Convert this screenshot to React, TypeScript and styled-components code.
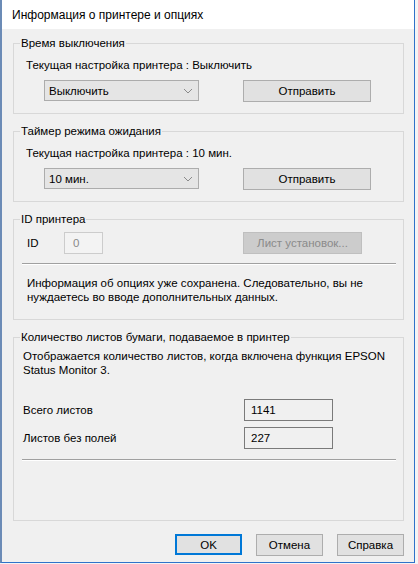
import React from "react";
import styled, { createGlobalStyle } from "styled-components";

const GlobalStyle = createGlobalStyle`
  html, body {
    margin: 0;
    padding: 0;
    background: #f4f4f4;
  }
  body {
    font-family: "Liberation Sans", Arial, sans-serif;
    font-size: 11.5px;
    color: #000;
  }
`;

const Window = styled.div`
  width: 415px;
  height: 563px;
  box-sizing: border-box;
  background: #f0f0f0;
  border-left: 2px solid #6b8bb6;
  border-right: 1px solid #2f72c9;
  border-bottom: 1px solid #2f72c9;
  display: flex;
  flex-direction: column;
`;

const TitleBar = styled.div`
  height: 29px;
  flex: none;
  background: #fff;
  display: flex;
  align-items: center;
  padding-left: 10px;
  font-size: 12px;
`;

const Body = styled.div`
  flex: 1;
  display: flex;
  flex-direction: column;
  gap: 9px;
  padding: 6px 10px 0 11px;
`;

const Group = styled.fieldset`
  margin: 0;
  padding: 0;
  min-width: 0;
  border: 1px solid #d8d8d8;
`;

const Legend = styled.legend`
  margin-left: 6px;
  padding: 0 1px;
  line-height: 16px;
`;

const Content = styled.div<{ $pad: string }>`
  padding: ${(p) => p.$pad};
  display: flex;
  flex-direction: column;
`;

const Line = styled.div<{ $lh?: number; $indent?: number; $top?: number }>`
  line-height: ${(p) => p.$lh ?? 16}px;
  padding-left: ${(p) => p.$indent ?? 0}px;
  margin-top: ${(p) => p.$top ?? 0}px;
`;

const Row = styled.div<{ $top: number; $indent?: number; $h?: number }>`
  display: flex;
  align-items: center;
  margin-top: ${(p) => p.$top}px;
  padding-left: ${(p) => p.$indent ?? 0}px;
  height: ${(p) => p.$h ?? 22}px;
`;

const Select = styled.div`
  width: 155px;
  height: 21px;
  box-sizing: border-box;
  background: #e5e5e5;
  border: 1px solid #acacac;
  display: flex;
  align-items: center;
  justify-content: space-between;
  padding: 0 5px 0 4px;
`;

const Button = styled.div<{ $w: number; $gap?: number; $disabled?: boolean; $default?: boolean }>`
  width: ${(p) => p.$w}px;
  height: ${(p) => (p.$default ? 21 : 22)}px;
  box-sizing: border-box;
  margin-left: ${(p) => p.$gap ?? 0}px;
  background: ${(p) => (p.$disabled ? "#cccccc" : "#e1e1e1")};
  border: ${(p) =>
    p.$default ? "2px solid #0078d7" : p.$disabled ? "1px solid #bfbfbf" : "1px solid #adadad"};
  color: ${(p) => (p.$disabled ? "#8a8a8a" : "#000")};
  display: flex;
  align-items: center;
  justify-content: center;
`;

const Label = styled.div<{ $w: number }>`
  width: ${(p) => p.$w}px;
  flex: none;
`;

const Field = styled.div<{ $w: number; $disabled?: boolean }>`
  width: ${(p) => p.$w}px;
  height: 22px;
  box-sizing: border-box;
  background: ${(p) => (p.$disabled ? "#f3f3f3" : "#f0f0f0")};
  border: 1px solid ${(p) => (p.$disabled ? "#cccccc" : "#7a7a7a")};
  color: ${(p) => (p.$disabled ? "#8a8a8a" : "#000")};
  display: flex;
  align-items: center;
  padding-left: ${(p) => (p.$disabled ? 8 : 6)}px;
`;

const Separator = styled.div<{ $top: number }>`
  margin-top: ${(p) => p.$top}px;
  height: 1px;
  background: #a0a0a0;
  border-bottom: 1px solid #ffffff;
`;

const Footer = styled.div`
  display: flex;
  justify-content: flex-end;
  gap: 14px;
  margin-top: 4px;
`;

function Chevron() {
  return (
    <svg width="10" height="6" viewBox="0 0 10 6">
      <polyline points="1,1 5,5 9,1" fill="none" stroke="#8a8a8a" strokeWidth="1" />
    </svg>
  );
}

function SettingGroup({ title, current, value }: { title: string; current: string; value: string }) {
  return (
    <Group>
      <Legend>{title}</Legend>
      <Content $pad="6px 12px 12px 12px">
        <Line>Текущая настройка принтера : {current}</Line>
        <Row $top={7} $indent={18} $h={21}>
          <Select>
            <span>{value}</span>
            <Chevron />
          </Select>
          <Button $w={128} $gap={44}>
            Отправить
          </Button>
        </Row>
      </Content>
    </Group>
  );
}

export default function App() {
  return (
    <>
      <GlobalStyle />
      <Window>
        <TitleBar>Информация о принтере и опциях</TitleBar>
        <Body>
          <SettingGroup title="Время выключения" current="Выключить" value="Выключить" />
          <SettingGroup title="Таймер режима ожидания" current="10 мин." value="10 мин." />
          <Group>
            <Legend>ID принтера</Legend>
            <Content $pad="5px 7px 15px 8px">
              <Row $top={0} $indent={5}>
                <Label $w={37}>ID</Label>
                <Field $w={39} $disabled>
                  0
                </Field>
                <Button $w={119} $gap={140} $disabled>
                  Лист установок...
                </Button>
              </Row>
              <Separator $top={9} />
              <Line $lh={14} $indent={5} $top={11}>
                Информация об опциях уже сохранена. Следовательно, вы не
                <br />
                нуждаетесь во вводе дополнительных данных.
              </Line>
            </Content>
          </Group>
          <Group>
            <Legend>Количество листов бумаги, подаваемое в принтер</Legend>
            <Content $pad="4px 7px 59px 8px">
              <Line $lh={14} $indent={1}>
                Отображается количество листов, когда включена функция EPSON
                <br />
                Status Monitor 3.
              </Line>
              <Row $top={22} $indent={1}>
                <Label $w={221}>Всего листов</Label>
                <Field $w={89}>1141</Field>
              </Row>
              <Row $top={6} $indent={1}>
                <Label $w={221}>Листов без полей</Label>
                <Field $w={89}>227</Field>
              </Row>
              <Separator $top={10} />
            </Content>
          </Group>
          <Footer>
            <Button $w={67} $default>
              OK
            </Button>
            <Button $w={67}>Отмена</Button>
            <Button $w={67}>Справка</Button>
          </Footer>
        </Body>
      </Window>
    </>
  );
}
